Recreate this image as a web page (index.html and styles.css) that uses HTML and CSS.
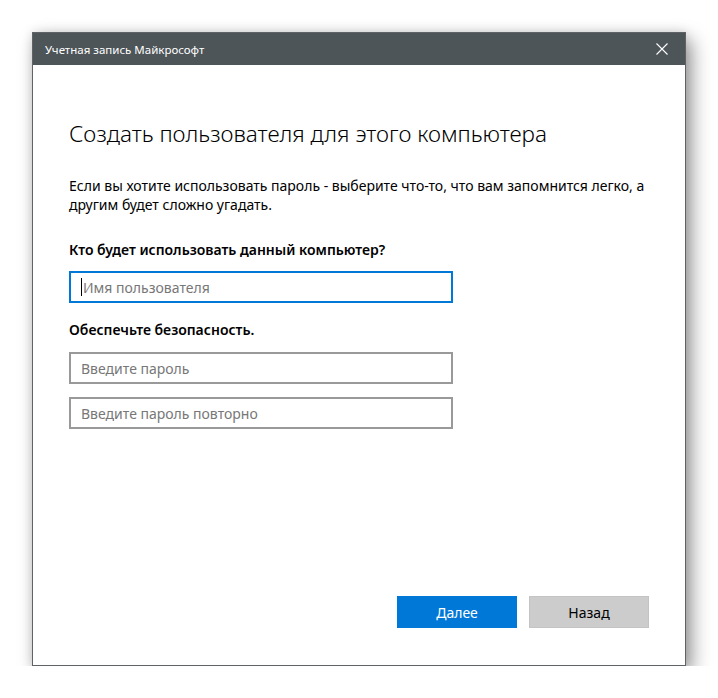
FILE: index.html
```html
<!DOCTYPE html>
<html lang="ru">
<head>
<meta charset="utf-8">
<title>Учетная запись Майкрософт</title>
<link rel="stylesheet" href="styles.css">
</head>
<body>
<div class="window">
  <div class="titlebar">
    <span class="title">Учетная запись Майкрософт</span>
    <svg class="close" width="12" height="12" viewBox="0 0 12 12"><path d="M0.5 0.5 L11.5 11.5 M11.5 0.5 L0.5 11.5" stroke="#ffffff" stroke-width="1.1" fill="none"/></svg>
  </div>
  <div class="content">
    <h1 class="heading">Создать пользователя для этого компьютера</h1>
    <p class="intro">Если вы хотите использовать пароль - выберите что-то, что вам запомнится легко, а другим будет сложно угадать.</p>
    <div class="label">Кто будет использовать данный компьютер?</div>
    <div class="field focused"><span class="caret"></span><span class="ph">Имя пользователя</span></div>
    <div class="label second">Обеспечьте безопасность.</div>
    <div class="field"><span class="ph">Введите пароль</span></div>
    <div class="field gap"><span class="ph">Введите пароль повторно</span></div>
    <div class="spacer"></div>
    <div class="buttons">
      <div class="btn primary">Далее</div>
      <div class="btn secondary">Назад</div>
    </div>
  </div>
</div>
</body>
</html>
```
FILE: styles.css
```css
html, body {
  margin: 0;
  padding: 0;
  background: #ffffff;
}
body {
  font-family: "Noto Sans", "Open Sans", sans-serif;
  color: #000;
}
.window {
  margin: 32px 0 0 32px;
  width: 654px;
  height: 634px;
  box-sizing: border-box;
  border: 1px solid #5f6366;
  display: flex;
  flex-direction: column;
  background: #fff;
  box-shadow: 6px 8px 18px rgba(0,0,0,0.4), 0 0 10px rgba(0,0,0,0.12);
}
.titlebar {
  height: 32px;
  background: #4d5559;
  display: flex;
  align-items: center;
  padding: 0 17px 0 12px;
  flex: none;
}
.title {
  color: #fff;
  font-size: 11.5px;
  flex: 1;
}
.close {
  display: block;
}
.content {
  flex: 1;
  display: flex;
  flex-direction: column;
  padding: 54px 36px 37px 36px;
}
.heading {
  margin: 0;
  font-weight: 300;
  font-size: 22.5px;
  line-height: 30px;
  color: #000;
}
.intro {
  margin: 27px 0 0 0;
  font-size: 14px;
  line-height: 19px;
  width: 590px;
}
.label {
  margin-top: 26px;
  font-size: 14px;
  font-weight: 600;
  line-height: 20px;
}
.label.second {
  margin-top: 17px;
}
.field {
  margin-top: 11px;
  width: 384px;
  height: 32px;
  box-sizing: border-box;
  border: 2px solid #999999;
  display: flex;
  align-items: center;
  padding-left: 10px;
}
.label.second + .field {
  margin-top: 12px;
}
.field.gap {
  margin-top: 13px;
}
.field.focused {
  border-color: #0078d7;
}
.caret {
  width: 1px;
  height: 18px;
  background: #000;
  margin-right: 1px;
}
.ph {
  color: #777777;
  font-size: 14px;
}
.spacer {
  flex: 1;
}
.buttons {
  display: flex;
  justify-content: flex-end;
  gap: 12px;
}
.btn {
  width: 120px;
  height: 32px;
  box-sizing: border-box;
  display: flex;
  align-items: center;
  justify-content: center;
  font-size: 14px;
}
.primary {
  background: #0078d7;
  color: #fff;
}
.secondary {
  background: #cccccc;
  border: 1px solid #c4c4c4;
  color: #000;
}
```
